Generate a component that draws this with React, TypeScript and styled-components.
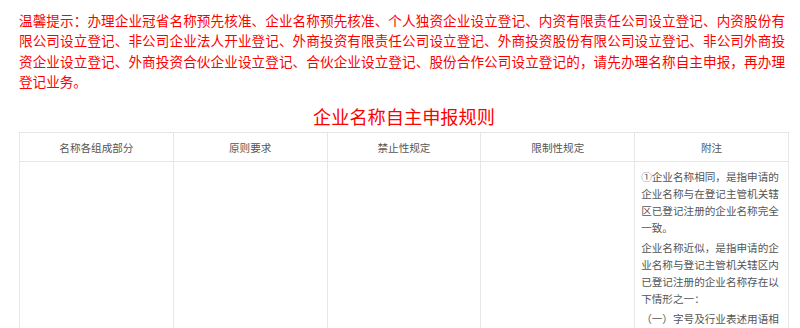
import React from 'react';
import styled, { createGlobalStyle } from 'styled-components';

const GlobalStyle = createGlobalStyle`
  html, body {
    margin: 0;
    padding: 0;
    background: #ffffff;
  }
  body {
    font-family: "Noto Sans CJK SC", "Noto Sans", sans-serif;
  }
`;

const Page = styled.div`
  width: 770px;
  padding: 10px 11px 0 19px;
  display: flex;
  flex-direction: column;
`;

const Notice = styled.p`
  margin: 0;
  width: 766px;
  font-size: 13.6px;
  line-height: 20.3px;
  color: #ff0000;
`;

const NoticeLine = styled.span<{ $last?: boolean }>`
  display: block;
  white-space: nowrap;
  text-align: ${(p) => (p.$last ? 'left' : 'justify')};
  text-align-last: ${(p) => (p.$last ? 'left' : 'justify')};
`;

const Title = styled.h2`
  margin: 13px 0 4px;
  font-size: 18.2px;
  line-height: 24px;
  font-weight: 400;
  text-align: center;
  color: #ff0000;
`;

const RuleTable = styled.table`
  width: 770px;
  border-collapse: collapse;
  table-layout: fixed;
  font-size: 10.6px;
  color: #555555;
`;

const HeadCell = styled.th`
  height: 28px;
  padding: 0;
  border: 1px solid #e6e6e6;
  font-weight: 400;
  text-align: center;
  vertical-align: middle;
`;

const BodyCell = styled.td`
  height: 200px;
  padding: 6px 6px 5px;
  border: 1px solid #e6e6e6;
  vertical-align: top;
  line-height: 17px;
`;

const Note = styled.p`
  margin: 0 0 3px;
`;

const headers = ['名称各组成部分', '原则要求', '禁止性规定', '限制性规定', '附注'];

const noticeLines = [
  '温馨提示：办理企业冠省名称预先核准、企业名称预先核准、个人独资企业设立登记、内资有限责任公司设立登记、内资股份有',
  '限公司设立登记、非公司企业法人开业登记、外商投资有限责任公司设立登记、外商投资股份有限公司设立登记、非公司外商投',
  '资企业设立登记、外商投资合伙企业设立登记、合伙企业设立登记、股份合作公司设立登记的，请先办理名称自主申报，再办理',
  '登记业务。',
];

const notes = [
  '①企业名称相同，是指申请的企业名称与在登记主管机关辖区已登记注册的企业名称完全一致。',
  '企业名称近似，是指申请的企业名称与登记主管机关辖区内已登记注册的企业名称存在以下情形之一：',
  '（一）字号及行业表述用语相同；',
];

const App: React.FC = () => {
  return (
    <>
      <GlobalStyle />
      <Page>
        <Notice>
          {noticeLines.map((line, i) => (
            <NoticeLine key={i} $last={i === noticeLines.length - 1}>
              {line}
            </NoticeLine>
          ))}
        </Notice>

        <Title>企业名称自主申报规则</Title>

        <RuleTable>
          <thead>
            <tr>
              {headers.map((h) => (
                <HeadCell key={h}>{h}</HeadCell>
              ))}
            </tr>
          </thead>
          <tbody>
            <tr>
              <BodyCell />
              <BodyCell />
              <BodyCell />
              <BodyCell />
              <BodyCell>
                {notes.map((n, i) => (
                  <Note key={i}>{n}</Note>
                ))}
              </BodyCell>
            </tr>
          </tbody>
        </RuleTable>
      </Page>
    </>
  );
};

export default App;
